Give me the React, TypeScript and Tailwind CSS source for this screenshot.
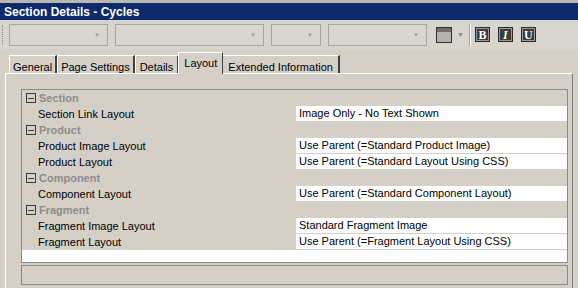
const GROUPS = [
  { name: "Section", items: [["Section Link Layout", "Image Only - No Text Shown"]] },
  {
    name: "Product",
    items: [
      ["Product Image Layout", "Use Parent (=Standard Product Image)"],
      ["Product Layout", "Use Parent (=Standard Layout Using CSS)"],
    ],
  },
  { name: "Component", items: [["Component Layout", "Use Parent (=Standard Component Layout)"]] },
  {
    name: "Fragment",
    items: [
      ["Fragment Image Layout", "Standard Fragment Image"],
      ["Fragment Layout", "Use Parent (=Fragment Layout Using CSS)"],
    ],
  },
];

const TABS = ["General", "Page Settings", "Details", "Layout", "Extended Information"];

function Combo({ w }: { w: string }) {
  return (
    <div className={`${w} h-[22px] border border-[#a8a59e] bg-[#d9d6cf] flex items-center justify-end pr-[7px]`}>
      <span className="text-[#a09d96] text-[6px] leading-none">▼</span>
    </div>
  );
}

function StyleBtn({ ch, italic }: { ch: string; italic?: boolean }) {
  return (
    <div className="w-[15px] h-[15px] bg-[#3c3c3c] border border-[#2a2a2a] flex items-center justify-center">
      <div className="w-[13px] h-[13px] border border-[#9a9a9a] flex items-center justify-center">
        <span
          className={`text-white font-bold text-[12px] leading-none ${italic ? "italic" : ""}`}
          style={{ fontFamily: '"Liberation Serif", serif' }}
        >
          {ch}
        </span>
      </div>
    </div>
  );
}

export default function App() {
  return (
    <div
      className="w-[578px] h-[288px] overflow-hidden bg-[#d4d0c8] text-[11px] text-black"
      style={{ fontFamily: '"Liberation Sans", Arial, sans-serif' }}
    >
      {/* title bar */}
      <div className="h-[20px] border-t-[3px] border-[#b9b7b2] bg-[#0c2a6c] flex items-center pl-[4px]">
        <span className="text-white font-bold text-[12px] leading-none">Section Details - Cycles</span>
      </div>

      {/* toolbar */}
      <div className="h-[29px] flex items-center bg-[#d8d5ce]">
        <div className="ml-[2px] w-[3px] h-[20px] border-l border-dotted border-[#888]" />
        <div className="ml-[4px] flex items-center gap-[7px]">
          <Combo w="w-[99px]" />
          <Combo w="w-[149px]" />
          <Combo w="w-[50px]" />
          <Combo w="w-[99px]" />
        </div>
        <div className="ml-[9px] w-[16px] h-[16px] border border-[#303030] bg-[#b4b2ae] flex flex-col">
          <div className="h-[4px] bg-[#6e6e6e]" />
        </div>
        <span className="ml-[5px] text-[#8a8780] text-[7px] leading-none">▼</span>
        <div className="ml-[5px] w-[2px] h-[22px] border-l border-[#a8a59e] border-r border-r-white" />
        <div className="ml-[4px] flex items-center gap-[8px]">
          <StyleBtn ch="B" />
          <StyleBtn ch="I" italic />
          <StyleBtn ch="U" />
        </div>
      </div>

      {/* tabs */}
      <div className="h-[24px] flex items-end pl-[9px]">
        {TABS.map((t) =>
          t === "Layout" ? (
            <div
              key={t}
              className="h-[22px] px-[5px] pt-[2px] bg-[#d4d0c8] border-t border-l border-white border-r border-r-[#404040] relative top-[1px] z-10 -mx-[1px]"
            >
              {t}
            </div>
          ) : (
            <div
              key={t}
              className={`h-[18px] ${t === "Extended Information" ? "px-[5px]" : t === "Details" ? "px-[4px]" : "px-[3px]"} pt-[3px] border-t border-l border-white border-r-2 border-r-[#404040]`}
            >
              {t}
            </div>
          )
        )}
      </div>

      {/* panel */}
      <div className="mx-[5px] h-[215px] border-t border-l border-white border-r border-r-[#808080] pl-[15px] pr-[4px] pt-[15px]">
        <div className="border border-[#8c8a85] bg-[#d4d0c8]">
          {GROUPS.map((g) => (
            <div key={g.name}>
              <div className="h-[16px] flex items-center">
                <div className="ml-[4px] w-[10px] h-[10px] border border-[#3a3a3a] flex items-center justify-center">
                  <div className="w-[6px] h-[1px] bg-[#3a3a3a]" />
                </div>
                <span className="ml-[3px] font-bold text-[#8e8c88]">{g.name}</span>
              </div>
              {g.items.map(([label, value]) => (
                <div key={label} className="h-[16px] flex">
                  <div className="w-[274px] pl-[16px] flex items-center">{label}</div>
                  <div className="flex-1 bg-white border-b border-[#d4d0c8] pl-[3px] flex items-center">{value}</div>
                </div>
              ))}
            </div>
          ))}
          <div className="h-[12px] bg-white" />
        </div>
        <div className="mt-[2px] h-[20px] border border-[#8c8a85] bg-[#d4d0c8]" />
      </div>
    </div>
  );
}
